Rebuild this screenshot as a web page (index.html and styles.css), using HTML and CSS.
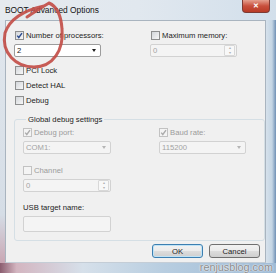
FILE: index.html
```html
<!DOCTYPE html>
<html lang="en">
<head>
  <meta charset="UTF-8">
  <title>BOOT Advanced Options</title>
  <link rel="stylesheet" href="styles.css">
</head>
<body>
  <div class="window">
    <div class="titlebar">
      <span class="title">BOOT Advanced Options</span>
      <div class="close">&#x2715;</div>
    </div>

    <div class="middle">
      <div class="frame-left"></div>
      <div class="client">
        <!-- processors / memory -->
        <div class="cols">
          <div class="col">
            <label class="opt"><span class="cb checked"><svg viewBox="0 0 7 7"><polyline points="1.2,3.6 2.8,5.5 6,1.2"/></svg></span>Number of processors:</label>
            <div class="combo"><span>2</span><i class="arrow"></i></div>
          </div>
          <div class="col">
            <label class="opt"><span class="cb"></span>Maximum memory:</label>
            <div class="spin off"><span>0</span><span class="spin-btns"><b>&#9652;</b><b>&#9662;</b></span></div>
          </div>
        </div>

        <div class="checks">
          <label class="opt"><span class="cb"></span>PCI Lock</label>
          <label class="opt"><span class="cb"></span>Detect HAL</label>
          <label class="opt"><span class="cb"></span>Debug</label>
        </div>

        <fieldset class="group">
          <legend>Global debug settings</legend>
          <div class="cols inner">
            <div class="col">
              <label class="opt off"><span class="cb checked"><svg viewBox="0 0 7 7"><polyline points="1.2,3.6 2.8,5.5 6,1.2"/></svg></span>Debug port:</label>
              <div class="combo off"><span>COM1:</span><i class="arrow"></i></div>
            </div>
            <div class="col">
              <label class="opt off"><span class="cb checked"><svg viewBox="0 0 7 7"><polyline points="1.2,3.6 2.8,5.5 6,1.2"/></svg></span>Baud rate:</label>
              <div class="combo off"><span>115200</span><i class="arrow"></i></div>
            </div>
          </div>
          <div class="col channel">
            <label class="opt off"><span class="cb"></span>Channel</label>
            <div class="spin off"><span>0</span><span class="spin-btns"><b>&#9652;</b><b>&#9662;</b></span></div>
          </div>
          <div class="col usb">
            <div class="usb-label">USB target name:</div>
            <div class="textbox off"></div>
          </div>
        </fieldset>

        <div class="buttons">
          <button class="btn default">OK</button>
          <button class="btn">Cancel</button>
        </div>
      </div>
      <div class="frame-right"></div>
    </div>

    <div class="frame-bottom"></div>

    <span class="watermark">renjusblog.com</span>

    <!-- red marker circle drawn over the screenshot -->
    <svg class="marker" viewBox="0 0 276 273">
      <path d="M27 17 C35 12 42 7 49 3 M44 6 C30 9 11 15 5 33 C1 53 16 67 34 67 C53 67 64 50 62 29 C61 14 56 6 49 3"/>
    </svg>
  </div>
</body>
</html>
```

FILE: styles.css
```css
html, body {
  margin: 0;
  padding: 0;
}
body {
  width: 276px;
  height: 273px;
  overflow: hidden;
  font-family: "Liberation Sans", Arial, sans-serif;
  font-size: 7.7px;
  color: #1c1c1c;
}
.window {
  position: relative;
  width: 276px;
  height: 273px;
  display: flex;
  flex-direction: column;
  background: #d9e3ec;
}

/* title bar */
.titlebar {
  height: 20px;
  display: flex;
  align-items: flex-start;
  background: linear-gradient(90deg, #e6eaee 0%, #e1e8ef 50%, #d2dfeb 100%);
}
.title {
  margin: 5px 0 0 5px;
  font-size: 8.4px;
  color: #141414;
}
.close {
  margin-left: auto;
  margin-right: 6px;
  width: 26px;
  height: 12px;
  border: 1px solid #7d3a33;
  border-top: none;
  border-radius: 0 0 4px 4px;
  background: linear-gradient(#e5a08f, #c84f3c 50%, #b93b26);
  color: #fff;
  font-size: 7px;
  font-weight: bold;
  line-height: 12px;
  text-align: center;
}

/* frame */
.middle {
  flex: 1;
  display: flex;
}
.frame-left {
  width: 5px;
  background: linear-gradient(#e1e7ed, #d5dde6 80%, #c9a6b3);
}
.frame-right {
  flex: 1;
  background: linear-gradient(90deg, #d6e1eb, #c4d5e4 60%, #6f90b5);
}
.frame-bottom {
  height: 10px;
  background: linear-gradient(90deg, #8b5d6f 0, #d3b5c0 6%, #d6e0ea 30%, #b7cde0 60%, #9fbbd6 100%);
}

/* client area */
.client {
  width: 261px;
  background: #f0f0f0;
  border: 1px solid #a9b4bf;
  border-bottom-color: #c4cdd6;
  box-sizing: border-box;
  padding: 9px 0 0 8px;
  display: flex;
  flex-direction: column;
}
.cols {
  display: grid;
  grid-template-columns: 136px 88px;
}
.col {
  display: flex;
  flex-direction: column;
  gap: 3px;
}

.opt {
  display: flex;
  align-items: center;
  gap: 2px;
  height: 11px;
  white-space: nowrap;
}
.opt.off {
  color: #9b9b9b;
}
.cb {
  width: 9px;
  height: 9px;
  box-sizing: border-box;
  border: 1px solid #8e8f8f;
  background: linear-gradient(135deg, #d3d6da, #f7f7f7);
  display: flex;
  align-items: center;
  justify-content: center;
}
.cb svg {
  width: 7px;
  height: 7px;
}
.cb polyline {
  fill: none;
  stroke: #2c4c8f;
  stroke-width: 1.4;
}
.opt.off .cb {
  border-color: #c2c2c2;
  background: #f4f4f4;
}
.opt.off .cb polyline {
  stroke: #acacac;
}

/* combos and spinners */
.combo, .spin, .textbox {
  box-sizing: border-box;
  height: 13px;
  width: 87px;
  border: 1px solid #9c9c9c;
  border-radius: 2px;
  background: #fff;
  display: flex;
  align-items: center;
  padding-left: 2px;
}
.combo span, .spin span {
  flex: 1;
}
.arrow {
  width: 0;
  height: 0;
  margin-right: 4px;
  border-left: 2.5px solid transparent;
  border-right: 2.5px solid transparent;
  border-top: 3px solid #1e1e1e;
}
.off {
  color: #a3a3a3;
}
.combo.off, .spin.off, .textbox.off {
  background: #f4f4f4;
  border-color: #d2d2d2;
}
.combo.off .arrow {
  border-top-color: #b5b5b5;
}
.spin {
  padding-right: 1px;
}
.spin-btns {
  flex: 0 0 9px !important;
  height: 9px;
  display: flex;
  flex-direction: column;
  border: 1px solid #d8d8d8;
  border-radius: 1px;
  background: #f8f8f8;
}
.spin-btns b {
  flex: 1;
  font-size: 4px;
  line-height: 4px;
  text-align: center;
  color: #b0b0b0;
  font-weight: normal;
}

.checks {
  margin-top: 8px;
  margin-left: 1px;
  display: flex;
  flex-direction: column;
  gap: 4px;
}
.cols .col .opt {
  margin-left: 1px;
}

/* group box */
.group {
  margin: 9px 0 0 0;
  width: 251px;
  height: 126px;
  box-sizing: border-box;
  border: 1px solid #d5dfe5;
  border-radius: 3px;
  padding: 3px 0 0 8px;
}
.group legend {
  padding: 0 2px;
  margin-left: 3px;
  color: #1c1c1c;
}
.inner .col .opt {
  margin-left: 0;
}
.channel {
  margin-top: 11px;
}
.channel .spin {
  width: 88px;
}
.inner .combo {
  width: 88px;
}
.inner .col:last-child .combo {
  width: 87px;
}
.usb {
  margin-top: 11px;
  gap: 3px;
}
.usb-label {
  height: 10px;
  line-height: 10px;
}
.textbox {
  width: 88px;
  height: 16px;
}

/* buttons */
.buttons {
  margin-top: auto;
  margin-bottom: 4px;
  padding-right: 5px;
  display: flex;
  justify-content: flex-end;
  gap: 6px;
}
.btn {
  width: 51px;
  height: 14px;
  padding: 0;
  border: 1px solid #707070;
  border-radius: 3px;
  background: linear-gradient(#f2f2f2, #ebebeb 50%, #dddddd 50%, #cfcfcf);
  font-family: "Liberation Sans", Arial, sans-serif;
  font-size: 7.7px;
  color: #1e1e1e;
}
.btn.default {
  border-color: #3c7fb1;
  box-shadow: inset 0 0 0 1px #bfe3f6;
}

/* overlays */
.watermark {
  position: absolute;
  right: 3px;
  bottom: 0;
  font-size: 10.8px;
  line-height: 11px;
  color: #8a8a8a;
  text-shadow: 0 0 1px #fff, 0 0 2px #fff;
}
.marker {
  position: absolute;
  left: 0;
  top: 0;
  width: 276px;
  height: 273px;
  pointer-events: none;
}
.marker path {
  fill: none;
  stroke: #c24b45;
  stroke-width: 3;
  stroke-linecap: round;
  opacity: 0.9;
}
```
